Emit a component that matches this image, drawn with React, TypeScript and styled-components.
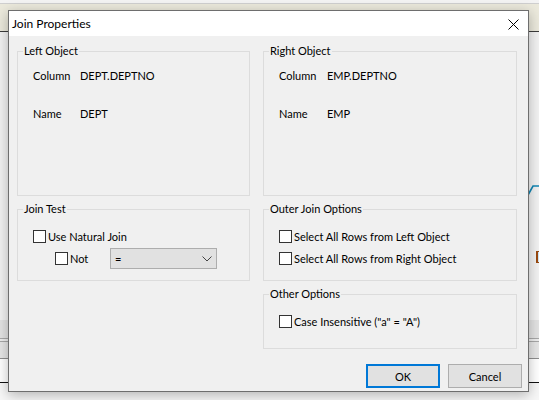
import React from "react";
import styled, { createGlobalStyle } from "styled-components";

const GlobalStyle = createGlobalStyle`
  html, body { margin: 0; padding: 0; }
  body {
    font-family: Lato, "Noto Sans", "Liberation Sans", sans-serif;
    font-size: 11px;
    color: #000;
    background: #f4f4f4;
  }
`;

const Desktop = styled.div`
  position: relative;
  width: 539px;
  height: 400px;
  overflow: hidden;
  display: flex;
  flex-direction: column;
  background: #f6f6f6;
`;

const TopEdge = styled.div`
  height: 3px;
  background: #f3f3f3;
  border-bottom: 1px solid #cfcfcf;
`;

const AppToolbar = styled.div`
  height: 27px;
  background: #ebe9dc;
  border-bottom: 1px solid #3c3c3c;
`;

const Workspace = styled.div`
  height: 288px;
  background: #f2f2f2;
`;

const Band = styled.div<{ $h: number; $bg: string; $line?: string }>`
  height: ${(p) => p.$h}px;
  background: ${(p) => p.$bg};
  border-bottom: ${(p) => (p.$line ? `1px solid ${p.$line}` : "none")};
`;

const BottomFill = styled.div`
  flex: 1;
  background: #f7f7f7;
`;

const BgStroke = styled.svg`
  position: absolute;
  left: 527px;
  top: 183px;
`;

const BgGlyph = styled.div`
  position: absolute;
  left: 536px;
  top: 251px;
  width: 4px;
  height: 10px;
  border-left: 2px solid #9a4a10;
  border-top: 1px solid #9a4a10;
  border-bottom: 1px solid #9a4a10;
  background: #cfe6f6;
`;

const Dialog = styled.div`
  position: absolute;
  left: 8px;
  top: 10px;
  width: 521px;
  height: 382px;
  box-sizing: border-box;
  border: 1px solid #6e6e6e;
  background: #f0f0f0;
  display: flex;
  flex-direction: column;
  box-shadow: 0 3px 12px rgba(0, 0, 0, 0.28);
`;

const TitleBar = styled.div`
  height: 25px;
  background: #ffffff;
  display: flex;
  align-items: center;
  justify-content: space-between;
  padding: 0 9px 0 3px;
`;

const TitleText = styled.span`
  font-size: 12px;
  line-height: 16px;
`;

const CloseIcon = styled.svg`
  display: block;
  margin-top: 1px;
`;

const Body = styled.div`
  display: grid;
  grid-template-columns: 233px 254px;
  grid-template-rows: 145px 72px 55px;
  column-gap: 13px;
  row-gap: 13px;
  padding: 15px 0 0 8px;
`;

const GroupBox = styled.div<{ $col?: number; $row?: number }>`
  position: relative;
  box-sizing: border-box;
  border: 1px solid #dcdcdc;
  grid-column: ${(p) => p.$col ?? "auto"};
  grid-row: ${(p) => p.$row ?? "auto"};
`;

const Legend = styled.span`
  position: absolute;
  top: -9px;
  left: 5px;
  padding: 0 1px;
  background: #f0f0f0;
  line-height: 16px;
  white-space: nowrap;
`;

const InfoGrid = styled.div<{ $labelWidth: number }>`
  display: grid;
  grid-template-columns: ${(p) => p.$labelWidth}px auto;
  row-gap: 22px;
  padding: 16px 0 0 15px;
  line-height: 16px;
`;

const CheckList = styled.div<{ $gap: number }>`
  display: flex;
  flex-direction: column;
  gap: ${(p) => p.$gap}px;
  padding: 20px 0 0 15px;
`;

const CheckRow = styled.div<{ $indent?: number }>`
  display: flex;
  align-items: center;
  margin-left: ${(p) => p.$indent ?? 0}px;
  min-height: 13px;
`;

const Box = styled.span`
  display: inline-block;
  box-sizing: border-box;
  width: 13px;
  height: 13px;
  border: 1px solid #333333;
  background: #ffffff;
  flex: none;
`;

const CheckText = styled.span<{ $width?: number }>`
  margin-left: 2px;
  line-height: 13px;
  white-space: nowrap;
  width: ${(p) => (p.$width ? `${p.$width}px` : "auto")};
`;

const Select = styled.div`
  box-sizing: border-box;
  width: 107px;
  height: 21px;
  border: 1px solid #adadad;
  background: #e1e1e1;
  display: flex;
  align-items: center;
  justify-content: space-between;
  padding: 0 4px 0 4px;
  line-height: 16px;
`;

const Footer = styled.div`
  display: flex;
  justify-content: flex-end;
  gap: 8px;
  margin-top: 15px;
  padding-right: 6px;
`;

const Button = styled.button<{ $primary?: boolean }>`
  box-sizing: border-box;
  width: 74px;
  height: 24px;
  margin: 0;
  padding: 0;
  font-family: inherit;
  font-size: 11px;
  color: #000;
  background: #e1e1e1;
  border: ${(p) => (p.$primary ? "2px solid #0078d7" : "1px solid #adadad")};
  border-radius: 0;
`;

const Check = ({ label, width }: { label: string; width?: number }) => (
  <>
    <Box />
    <CheckText $width={width}>{label}</CheckText>
  </>
);

export default function App() {
  return (
    <>
      <GlobalStyle />
      <Desktop>
        <TopEdge />
        <AppToolbar />
        <Workspace />
        <Band $h={18} $bg="#e3e3e3" $line="#a8a8a8" />
        <Band $h={2} $bg="#eeeeee" $line="#a8a8a8" />
        <Band $h={16} $bg="#e6e6e6" $line="#8e8e8e" />
        <Band $h={23} $bg="#ffffff" $line="#111111" />
        <BottomFill />

        <BgStroke width="12" height="14" viewBox="0 0 12 14">
          <path d="M1 12 L6 3 L12 3" fill="none" stroke="#1186b4" strokeWidth="1.6" />
        </BgStroke>
        <BgGlyph />

        <Dialog>
          <TitleBar>
            <TitleText>Join Properties</TitleText>
            <CloseIcon width="11" height="11" viewBox="0 0 11 11">
              <path d="M0.5 0.5 L10.5 10.5 M10.5 0.5 L0.5 10.5" stroke="#000" strokeWidth="1" />
            </CloseIcon>
          </TitleBar>

          <Body>
            <GroupBox $col={1} $row={1}>
              <Legend>Left Object</Legend>
              <InfoGrid $labelWidth={47}>
                <span>Column</span>
                <span>DEPT.DEPTNO</span>
                <span>Name</span>
                <span>DEPT</span>
              </InfoGrid>
            </GroupBox>

            <GroupBox $col={2} $row={1}>
              <Legend>Right Object</Legend>
              <InfoGrid $labelWidth={48}>
                <span>Column</span>
                <span>EMP.DEPTNO</span>
                <span>Name</span>
                <span>EMP</span>
              </InfoGrid>
            </GroupBox>

            <GroupBox $col={1} $row={2}>
              <Legend>Join Test</Legend>
              <CheckList $gap={5}>
                <CheckRow>
                  <Check label="Use Natural Join" />
                </CheckRow>
                <CheckRow $indent={22}>
                  <Check label="Not" width={40} />
                  <Select>
                    <span>=</span>
                    <svg width="10" height="6" viewBox="0 0 10 6">
                      <path d="M0.5 0.5 L5 5 L9.5 0.5" fill="none" stroke="#444" strokeWidth="1" />
                    </svg>
                  </Select>
                </CheckRow>
              </CheckList>
            </GroupBox>

            <GroupBox $col={2} $row={2}>
              <Legend>Outer Join Options</Legend>
              <CheckList $gap={9}>
                <CheckRow>
                  <Check label="Select All Rows from Left Object" />
                </CheckRow>
                <CheckRow>
                  <Check label="Select All Rows from Right Object" />
                </CheckRow>
              </CheckList>
            </GroupBox>

            <GroupBox $col={2} $row={3}>
              <Legend>Other Options</Legend>
              <CheckList $gap={9}>
                <CheckRow>
                  <Check label={'Case Insensitive ("a" = "A")'} />
                </CheckRow>
              </CheckList>
            </GroupBox>
          </Body>

          <Footer>
            <Button $primary>OK</Button>
            <Button>Cancel</Button>
          </Footer>
        </Dialog>
      </Desktop>
    </>
  );
}
